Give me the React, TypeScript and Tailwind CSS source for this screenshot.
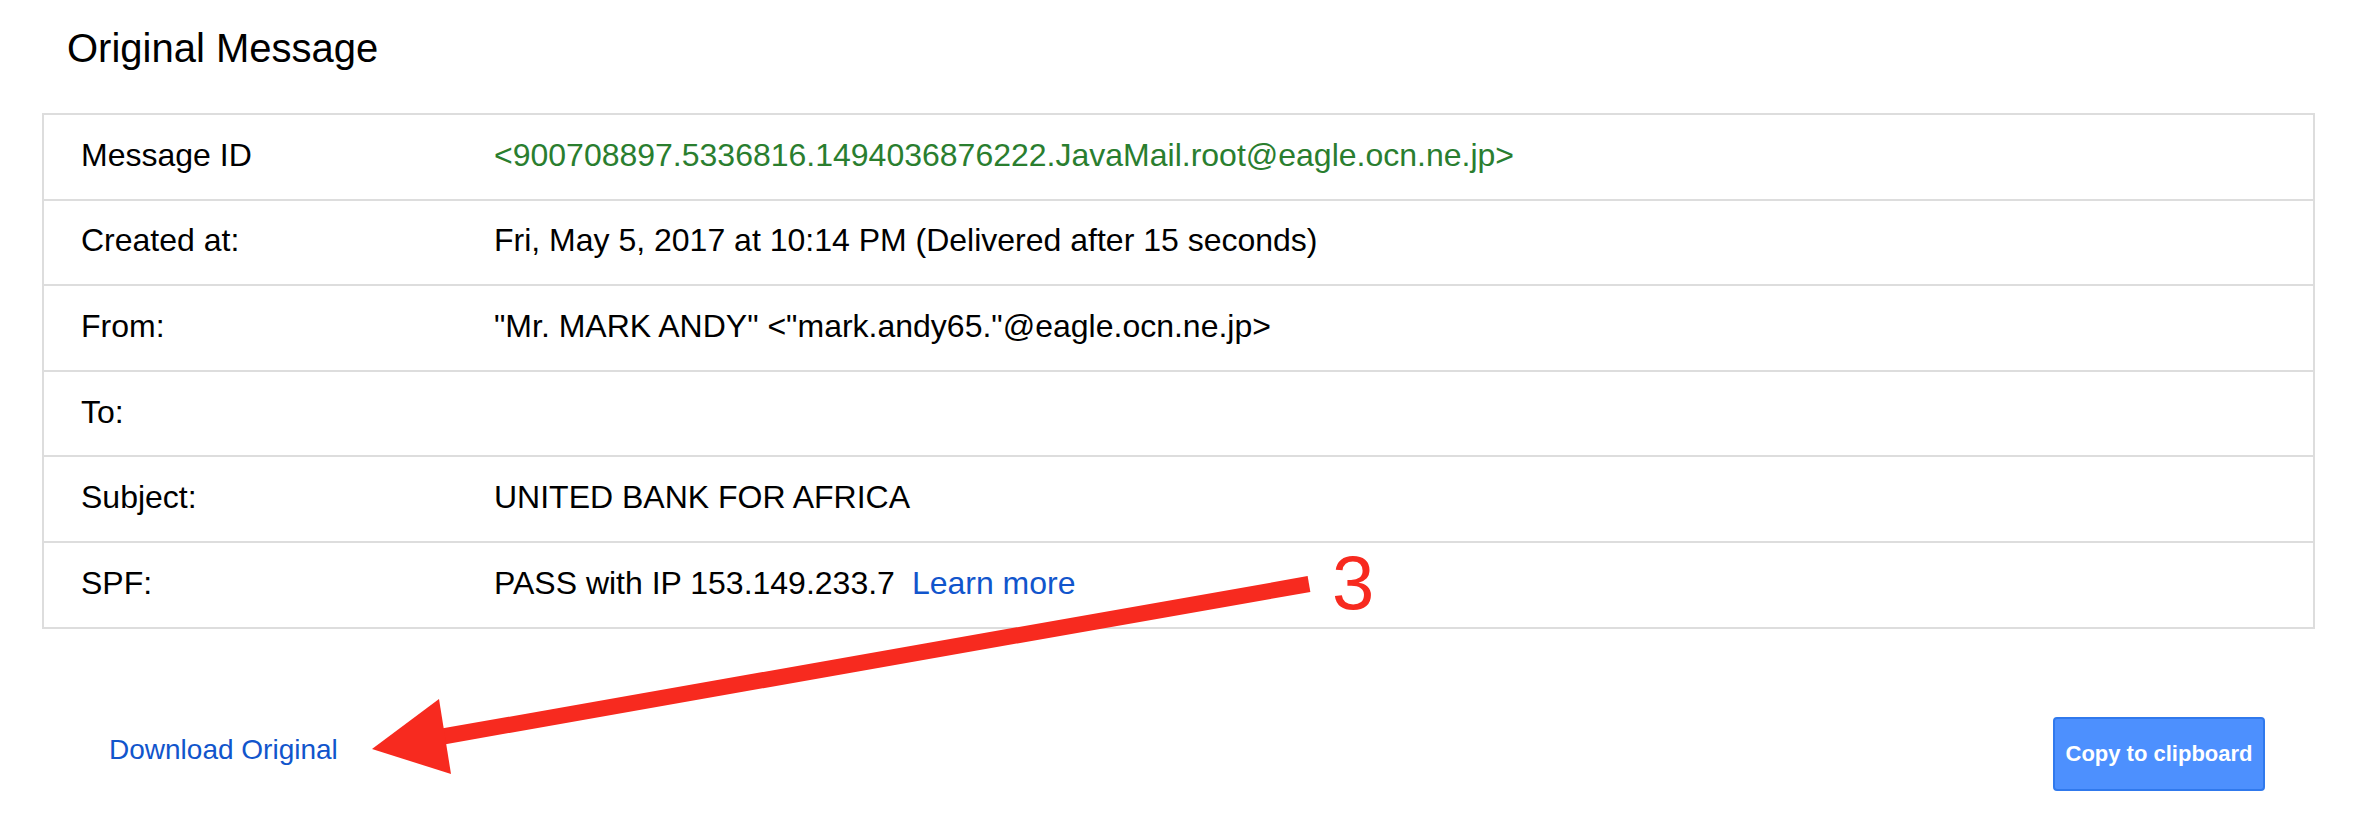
const rows: { label: string; value: React.ReactNode }[] = [
  {
    label: "Message ID",
    value: (
      <span className="text-[#2a7e2f]">
        {"<900708897.5336816.1494036876222.JavaMail.root@eagle.ocn.ne.jp>"}
      </span>
    ),
  },
  { label: "Created at:", value: "Fri, May 5, 2017 at 10:14 PM (Delivered after 15 seconds)" },
  { label: "From:", value: '"Mr. MARK ANDY" <"mark.andy65."@eagle.ocn.ne.jp>' },
  { label: "To:", value: "" },
  { label: "Subject:", value: "UNITED BANK FOR AFRICA" },
  {
    label: "SPF:",
    value: (
      <>
        PASS with IP 153.149.233.7
        <a href="#" className="ml-[17px] text-[#1155cc]">
          Learn more
        </a>
      </>
    ),
  },
];

export default function App() {
  return (
    <div className="relative min-h-screen bg-white pl-[42px] pr-[43px] pt-[28px] font-['Liberation_Sans',Arial,sans-serif] text-black">
      <h1 className="ml-[25px] text-[40px] leading-none font-normal">Original Message</h1>

      {/* header table */}
      <div className="mt-[45px] border-2 border-[#dddddd]">
        {rows.map((r, i) => (
          <div
            key={r.label}
            className={`grid grid-cols-[450px_1fr] items-center pb-1 text-[32px] leading-none ${
              i > 0 ? "h-[85.6px] border-t-2 border-[#dddddd]" : "h-[83.6px]"
            }`}
          >
            <div className="pl-[37px]">{r.label}</div>
            <div>{r.value}</div>
          </div>
        ))}
      </div>

      <div className="mt-[88px] flex items-center justify-between pl-[67px] pr-[50px]">
        <a href="#" className="pb-2 text-[28px] leading-none text-[#1155cc]">
          Download Original
        </a>
        <button className="h-[74px] w-[212px] rounded-[4px] border-2 border-[#3079ed] bg-[#4d90fe] text-[22px] font-bold text-white">
          Copy to clipboard
        </button>
      </div>

      {/* annotation */}
      <svg className="pointer-events-none absolute left-0 top-0" width="2358" height="822">
        <line x1="1309" y1="584" x2="440" y2="737" stroke="#f72a1f" strokeWidth="16" />
        <polygon points="372,749 439,699 451,774" fill="#f72a1f" />
      </svg>
      <span className="pointer-events-none absolute left-[1332px] top-[545px] text-[76px] leading-none text-[#f72a1f]">
        3
      </span>
    </div>
  );
}
